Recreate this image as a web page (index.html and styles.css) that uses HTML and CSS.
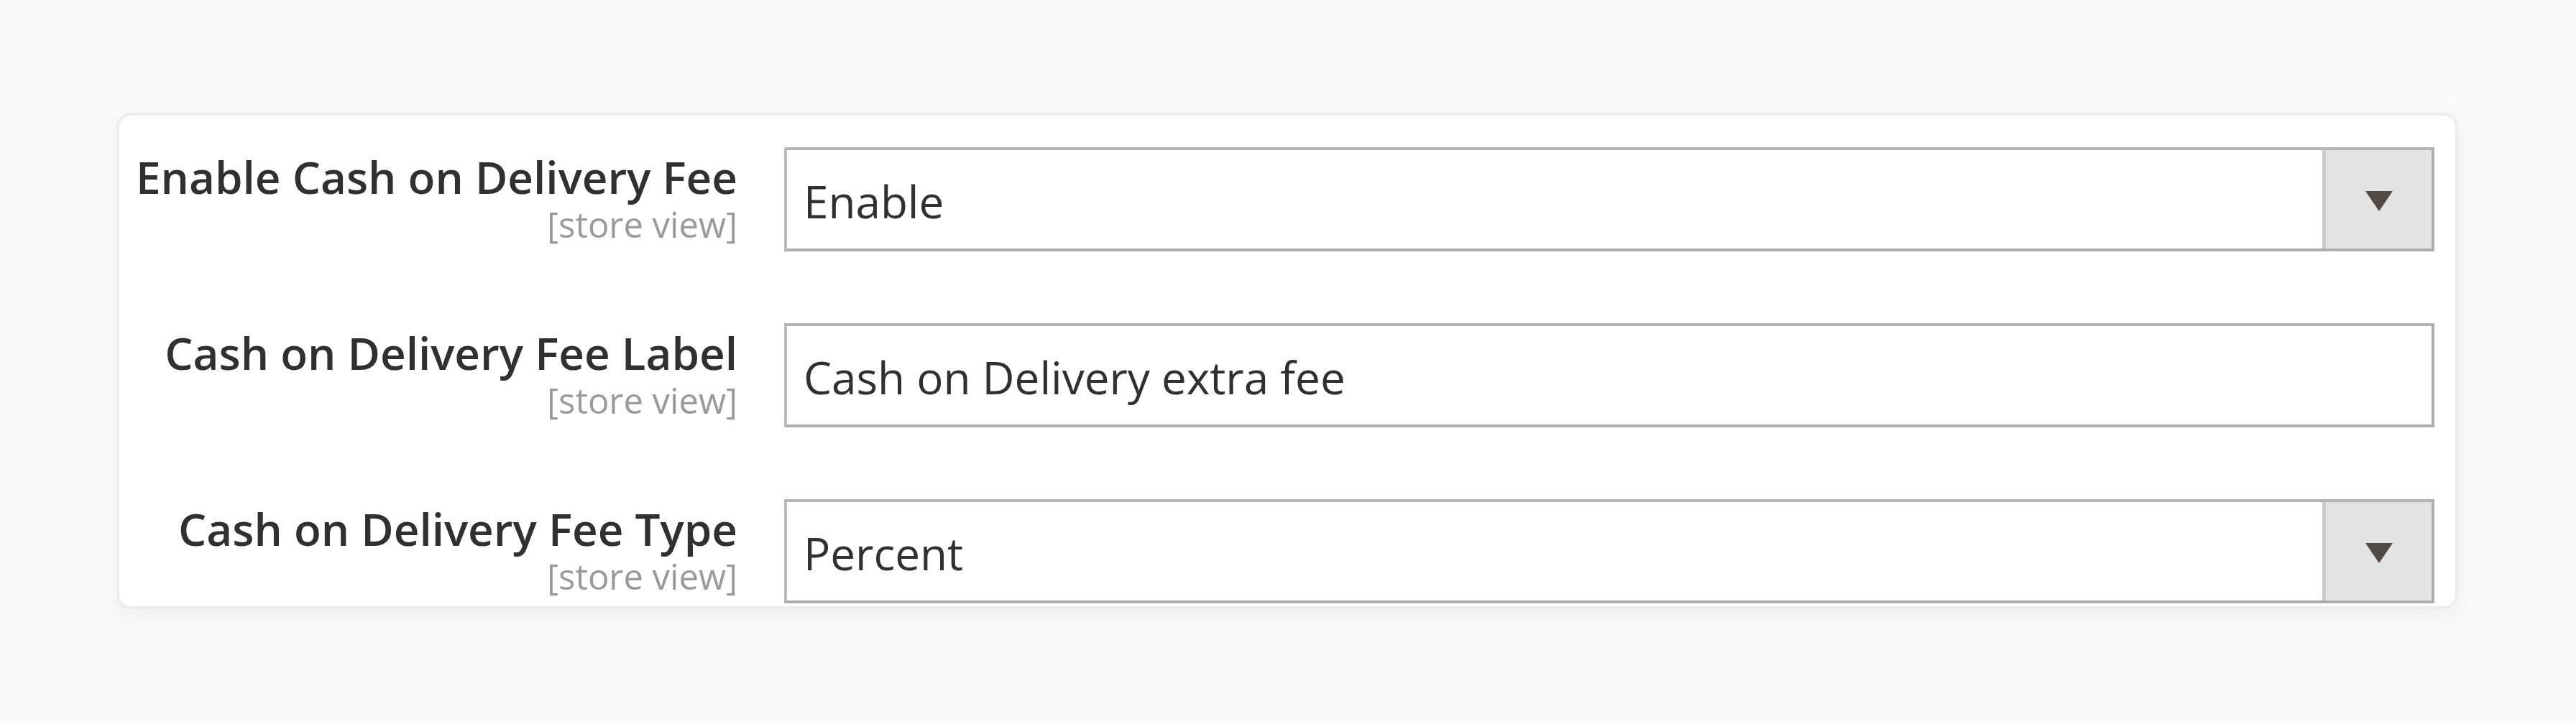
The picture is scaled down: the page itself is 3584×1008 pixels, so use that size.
FILE: index.html
```html
<!DOCTYPE html>
<html>
<head>
<meta charset="utf-8">
<link rel="stylesheet" href="styles.css">
</head>
<body>
<div class="card">
  <div class="label">
    <div class="label-text">Enable Cash on Delivery Fee</div>
    <div class="scope">[store view]</div>
  </div>
  <div class="control select">
    <div class="value">Enable</div>
    <div class="arrow"><span class="tri"></span></div>
  </div>

  <div class="label">
    <div class="label-text">Cash on Delivery Fee Label</div>
    <div class="scope">[store view]</div>
  </div>
  <div class="control">
    <div class="value">Cash on Delivery extra fee</div>
  </div>

  <div class="label">
    <div class="label-text">Cash on Delivery Fee Type</div>
    <div class="scope">[store view]</div>
  </div>
  <div class="control select">
    <div class="value">Percent</div>
    <div class="arrow"><span class="tri"></span></div>
  </div>
</div>
</body>
</html>
```
FILE: styles.css
```css
html, body {
  margin: 0;
  padding: 0;
  background: #fafafa;
  width: 3584px;
  height: 1008px;
  overflow: hidden;
}
body {
  font-family: "Open Sans", "Liberation Sans", sans-serif;
  padding-top: 157px;
  padding-left: 162px;
  box-sizing: border-box;
}
.card {
  box-sizing: border-box;
  width: 3258px;
  height: 691px;
  background: #fff;
  border: 4px solid #ededed;
  border-radius: 20px;
  box-shadow: 0 8px 30px rgba(0,0,0,0.05);
  padding: 44px 29px 3px 0;
  display: grid;
  grid-template-columns: 860px 1fr;
  column-gap: 65px;
  row-gap: 100px;
  align-content: start;
}
.label {
  text-align: right;
  padding-top: 4px;
}
.label-text {
  font-size: 62px;
  font-weight: 600;
  color: #303030;
  line-height: 74px;
}
.scope {
  font-size: 49px;
  color: #9a9a9a;
  line-height: 54px;
  margin-top: 2px;
}
.control {
  box-sizing: border-box;
  height: 145px;
  border: 4px solid #adadad;
  border-top-color: #b4b4b4;
  border-left-color: #bdbdbd;
  display: flex;
  align-items: center;
  background: #fff;
}
.value {
  flex: 1;
  font-size: 62px;
  color: #303030;
  padding-left: 23px;
  line-height: 1;
  padding-top: 4px;
}
.arrow {
  align-self: stretch;
  width: 147px;
  background: #e3e3e3;
  border-left: 5px solid #cbcbcb;
  display: flex;
  align-items: center;
  justify-content: center;
}
.tri {
  width: 0;
  height: 0;
  border-left: 19px solid transparent;
  border-right: 19px solid transparent;
  border-top: 28px solid #514943;
  margin-top: 4px;
}
```
